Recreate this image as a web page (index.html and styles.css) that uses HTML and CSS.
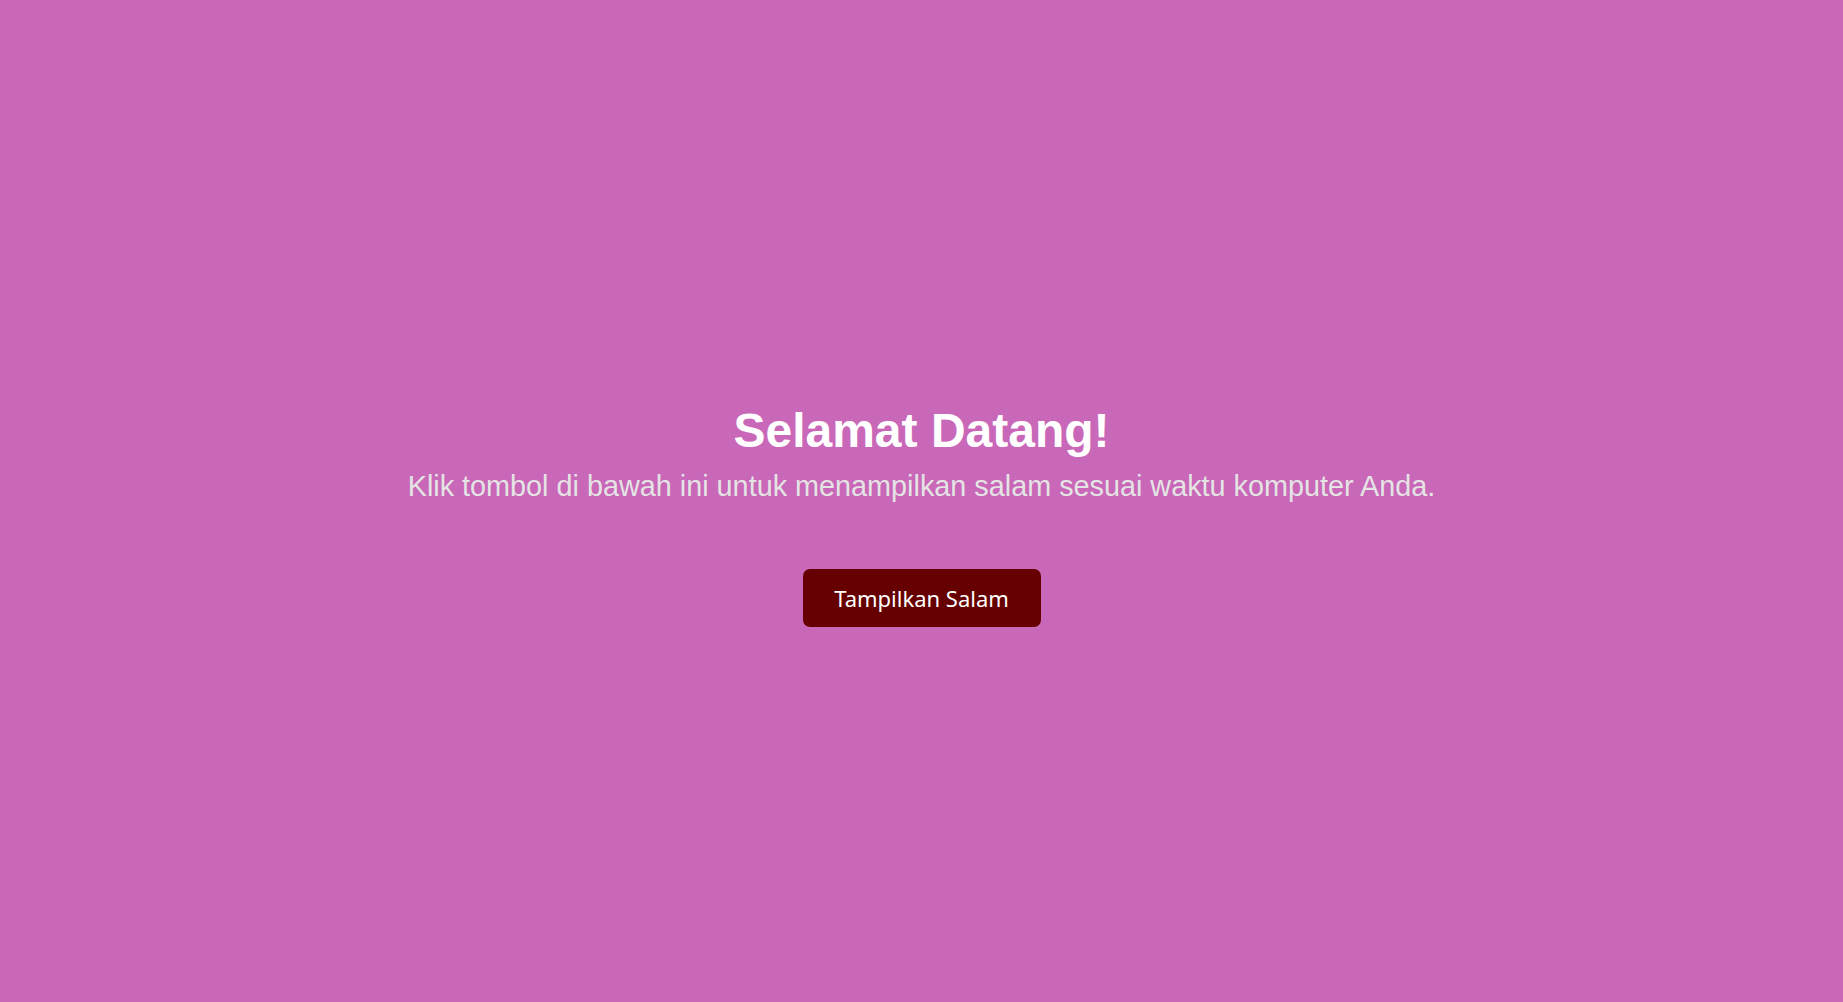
FILE: index.html
```html
<!DOCTYPE html>
<html lang="id">
<head>
<meta charset="utf-8">
<title>Salam</title>
<link rel="stylesheet" href="styles.css">
</head>
<body>
<main class="page">
  <h1 class="title">Selamat Datang!</h1>
  <p class="subtitle">Klik tombol di bawah ini untuk menampilkan salam sesuai waktu komputer Anda.</p>
  <button class="btn" type="button">Tampilkan Salam</button>
</main>
</body>
</html>
```
FILE: styles.css
```css
html, body {
  margin: 0;
  padding: 0;
  height: 100%;
}
body {
  background: #c967b8;
  font-family: "Liberation Sans", Arial, sans-serif;
}
.page {
  box-sizing: border-box;
  height: 100%;
  padding-top: 28px;
  display: flex;
  flex-direction: column;
  align-items: center;
  justify-content: center;
  text-align: center;
}
.title {
  margin: 0;
  font-size: 48px;
  font-weight: bold;
  color: #ffffff;
  line-height: 1.15;
}
.subtitle {
  margin: 11px 0 0;
  font-size: 28.8px;
  color: #e4e4e4;
}
.btn {
  margin-top: 66px;
  width: 238px;
  height: 58px;
  background: #660000;
  color: #ffffff;
  border: none;
  border-radius: 7px;
  font-family: "Noto Sans", "Open Sans", sans-serif;
  font-size: 22px;
}
```
